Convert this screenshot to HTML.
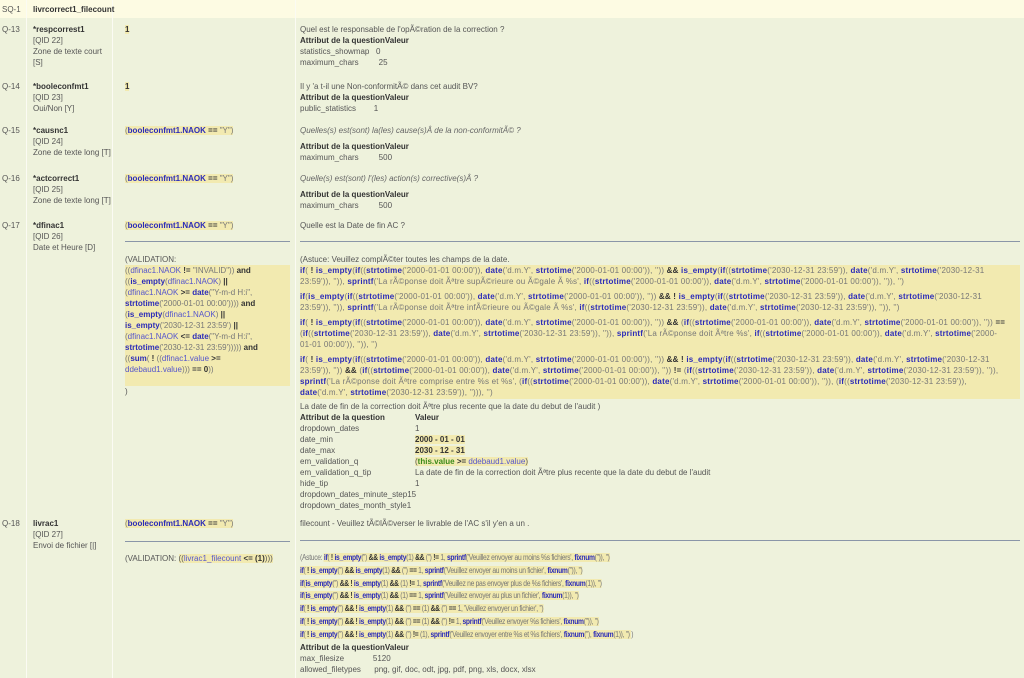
<!DOCTYPE html>
<html><head><meta charset="utf-8"><style>
body{margin:0;width:1024px;height:678px;overflow:hidden;background:#eef2dc;font-family:"Liberation Sans",sans-serif;font-size:8px;color:#555;position:relative}
.row{position:absolute;left:0;width:1024px;background:#eef2dc;border-bottom:1px solid #fbfbf3}
.c{position:absolute;top:0;bottom:0;border-right:1px solid #fbfbf3}
.c1{left:0;width:26px}.c2{left:26px;width:86px}.c3{left:112px;width:183px}.c4{left:295px;width:729px;border-right:none}
.t{position:absolute;white-space:nowrap;line-height:11px}
b{color:#333}
.h{background:#f2eab0}
.f{color:#2b2bb8;font-weight:bold}
.v{color:#5555cc}
.g{color:#3a8a1a;font-weight:bold}
.k{color:#333;font-weight:bold}
.s{color:#777}
.code{letter-spacing:0.2px}
.code2{letter-spacing:-0.35px;transform:scaleX(0.84);transform-origin:0 0}
.hr{position:absolute;height:1px;background:#8a96a8}
i{color:#666}
</style></head><body>

<div class="row" style="top:0;height:18px;background:#fdfbe3">
 <div class="c c1"></div><div class="c c2"></div><div class="c c3"></div><div class="c c4"></div>
 <div class="t" style="left:2px;top:4px">SQ-1</div>
 <div class="t" style="left:33px;top:4px"><b>livrcorrect1_filecount</b></div>
</div>

<div class="row" style="top:18px;height:57px">
 <div class="c c1"></div><div class="c c2"></div><div class="c c3"></div><div class="c c4"></div>
 <div class="t" style="left:2px;top:6px">Q-13</div>
 <div class="t" style="left:33px;top:6px"><b>*respcorrest1</b><br>[QID 22]<br>Zone de texte court<br>[S]</div>
 <div class="t" style="left:125px;top:6px"><span class="h k">1</span></div>
 <div class="t" style="left:300px;top:6px">Quel est le responsable de l'opÃ©ration de la correction ?<br><b>Attribut de la questionValeur</b><br>statistics_showmap&nbsp;&nbsp; 0<br>maximum_chars&nbsp;&nbsp;&nbsp;&nbsp;&nbsp;&nbsp;&nbsp;&nbsp; 25</div>
</div>

<div class="row" style="top:75px;height:44px">
 <div class="c c1"></div><div class="c c2"></div><div class="c c3"></div><div class="c c4"></div>
 <div class="t" style="left:2px;top:6px">Q-14</div>
 <div class="t" style="left:33px;top:6px"><b>*booleconfmt1</b><br>[QID 23]<br>Oui/Non [Y]</div>
 <div class="t" style="left:125px;top:6px"><span class="h k">1</span></div>
 <div class="t" style="left:300px;top:6px">Il y 'a t-il une Non-conformitÃ© dans cet audit BV?<br><b>Attribut de la questionValeur</b><br>public_statistics&nbsp;&nbsp;&nbsp;&nbsp;&nbsp;&nbsp;&nbsp; 1</div>
</div>

<div class="row" style="top:119px;height:48px">
 <div class="c c1"></div><div class="c c2"></div><div class="c c3"></div><div class="c c4"></div>
 <div class="t" style="left:2px;top:6px">Q-15</div>
 <div class="t" style="left:33px;top:6px"><b>*causnc1</b><br>[QID 24]<br>Zone de texte long [T]</div>
 <div class="t" style="left:125px;top:6px"><span class="h"><span class="s">(</span><span class="f">booleconfmt1.NAOK</span> <span class="k">==</span> <span class="s">"Y")</span></span></div>
 <div class="t" style="left:300px;top:6px"><i>Quelles(s) est(sont) la(les) cause(s)Â de la non-conformitÃ© ?</i></div>
 <div class="t" style="left:300px;top:22px"><b>Attribut de la questionValeur</b><br>maximum_chars&nbsp;&nbsp;&nbsp;&nbsp;&nbsp;&nbsp;&nbsp;&nbsp; 500</div>
</div>

<div class="row" style="top:167px;height:45px">
 <div class="c c1"></div><div class="c c2"></div><div class="c c3"></div><div class="c c4"></div>
 <div class="t" style="left:2px;top:6px">Q-16</div>
 <div class="t" style="left:33px;top:6px"><b>*actcorrect1</b><br>[QID 25]<br>Zone de texte long [T]</div>
 <div class="t" style="left:125px;top:6px"><span class="h"><span class="s">(</span><span class="f">booleconfmt1.NAOK</span> <span class="k">==</span> <span class="s">"Y")</span></span></div>
 <div class="t" style="left:300px;top:6px"><i>Quelle(s) est(sont) l'(les) action(s) corrective(s)Â ?</i></div>
 <div class="t" style="left:300px;top:22px"><b>Attribut de la questionValeur</b><br>maximum_chars&nbsp;&nbsp;&nbsp;&nbsp;&nbsp;&nbsp;&nbsp;&nbsp; 500</div>
</div>

<div class="row" style="top:212px;height:298px">
 <div class="c c1"></div><div class="c c2"></div><div class="c c3"></div><div class="c c4"></div>
 <div class="t" style="left:2px;top:8px">Q-17</div>
 <div class="t" style="left:33px;top:8px"><b>*dfinac1</b><br>[QID 26]<br>Date et Heure [D]</div>
 <div class="t" style="left:125px;top:8px"><span class="h"><span class="s">(</span><span class="f">booleconfmt1.NAOK</span> <span class="k">==</span> <span class="s">"Y")</span></span></div>
 <div class="hr" style="left:125px;top:29px;width:165px"></div>
 <div class="t" style="left:125px;top:42px">(VALIDATION:</div>
 <div class="t h" style="left:125px;top:53px;width:165px;height:121px;color:#777">((<span class="v">dfinac1.NAOK</span> <span class="k">!=</span> "INVALID")) <span class="k">and</span><br>((<span class="f">is_empty</span>(<span class="v">dfinac1.NAOK</span>) <span class="k">||</span><br>(<span class="v">dfinac1.NAOK</span> <span class="k">&gt;=</span> <span class="f">date</span>("Y-m-d H:i",<br><span class="f">strtotime</span>('2000-01-01 00:00')))) <span class="k">and</span><br>(<span class="f">is_empty</span>(<span class="v">dfinac1.NAOK</span>) <span class="k">||</span><br><span class="f">is_empty</span>('2030-12-31 23:59') <span class="k">||</span><br>(<span class="v">dfinac1.NAOK</span> <span class="k">&lt;=</span> <span class="f">date</span>("Y-m-d H:i",<br><span class="f">strtotime</span>('2030-12-31 23:59'))))) <span class="k">and</span><br>((<span class="f">sum</span>( <span class="k">!</span> ((<span class="v">dfinac1.value</span> <span class="k">&gt;=</span><br><span class="v">ddebaud1.value</span>))) <span class="k">==</span> <span class="k">0</span>))</div>
 <div class="t" style="left:125px;top:174px">)</div>

 <div class="t" style="left:300px;top:8px">Quelle est la Date de fin AC ?</div>
 <div class="hr" style="left:300px;top:29px;width:720px"></div>
 <div class="t" style="left:300px;top:42px">(Astuce: Veuillez complÃ©ter toutes les champs de la date.</div>
 <div class="t h code" style="left:300px;top:53px;width:720px;height:134px;color:#777;line-height:11px;overflow:hidden">
<span class="f">if</span>( <span class="k">!</span> <span class="f">is_empty</span>(<span class="f">if</span>((<span class="f">strtotime</span>('2000-01-01 00:00')), <span class="f">date</span>('d.m.Y', <span class="f">strtotime</span>('2000-01-01 00:00')), '')) <span class="k">&amp;&amp;</span> <span class="f">is_empty</span>(<span class="f">if</span>((<span class="f">strtotime</span>('2030-12-31 23:59')), <span class="f">date</span>('d.m.Y', <span class="f">strtotime</span>('2030-12-31<br>23:59')), '')), <span class="f">sprintf</span>('La rÃ©ponse doit Ãªtre supÃ©rieure ou Ã©gale Ã  %s', <span class="f">if</span>((<span class="f">strtotime</span>('2000-01-01 00:00')), <span class="f">date</span>('d.m.Y', <span class="f">strtotime</span>('2000-01-01 00:00')), '')), '')<br>
<div style="height:4px"></div><span class="f">if</span>(<span class="f">is_empty</span>(<span class="f">if</span>((<span class="f">strtotime</span>('2000-01-01 00:00')), <span class="f">date</span>('d.m.Y', <span class="f">strtotime</span>('2000-01-01 00:00')), '')) <span class="k">&amp;&amp; !</span> <span class="f">is_empty</span>(<span class="f">if</span>((<span class="f">strtotime</span>('2030-12-31 23:59')), <span class="f">date</span>('d.m.Y', <span class="f">strtotime</span>('2030-12-31<br>23:59')), '')), <span class="f">sprintf</span>('La rÃ©ponse doit Ãªtre infÃ©rieure ou Ã©gale Ã  %s', <span class="f">if</span>((<span class="f">strtotime</span>('2030-12-31 23:59')), <span class="f">date</span>('d.m.Y', <span class="f">strtotime</span>('2030-12-31 23:59')), '')), '')<br>
<div style="height:4px"></div><span class="f">if</span>( <span class="k">!</span> <span class="f">is_empty</span>(<span class="f">if</span>((<span class="f">strtotime</span>('2000-01-01 00:00')), <span class="f">date</span>('d.m.Y', <span class="f">strtotime</span>('2000-01-01 00:00')), '')) <span class="k">&amp;&amp;</span> (<span class="f">if</span>((<span class="f">strtotime</span>('2000-01-01 00:00')), <span class="f">date</span>('d.m.Y', <span class="f">strtotime</span>('2000-01-01 00:00')), '')) <span class="k">==</span><br>(<span class="f">if</span>((<span class="f">strtotime</span>('2030-12-31 23:59')), <span class="f">date</span>('d.m.Y', <span class="f">strtotime</span>('2030-12-31 23:59')), '')), <span class="f">sprintf</span>('La rÃ©ponse doit Ãªtre %s', <span class="f">if</span>((<span class="f">strtotime</span>('2000-01-01 00:00')), <span class="f">date</span>('d.m.Y', <span class="f">strtotime</span>('2000-<br>01-01 00:00')), '')), '')<br>
<div style="height:4px"></div><span class="f">if</span>( <span class="k">!</span> <span class="f">is_empty</span>(<span class="f">if</span>((<span class="f">strtotime</span>('2000-01-01 00:00')), <span class="f">date</span>('d.m.Y', <span class="f">strtotime</span>('2000-01-01 00:00')), '')) <span class="k">&amp;&amp; !</span> <span class="f">is_empty</span>(<span class="f">if</span>((<span class="f">strtotime</span>('2030-12-31 23:59')), <span class="f">date</span>('d.m.Y', <span class="f">strtotime</span>('2030-12-31<br>23:59')), '')) <span class="k">&amp;&amp;</span> (<span class="f">if</span>((<span class="f">strtotime</span>('2000-01-01 00:00')), <span class="f">date</span>('d.m.Y', <span class="f">strtotime</span>('2000-01-01 00:00')), '')) <span class="k">!=</span> (<span class="f">if</span>((<span class="f">strtotime</span>('2030-12-31 23:59')), <span class="f">date</span>('d.m.Y', <span class="f">strtotime</span>('2030-12-31 23:59')), '')),<br><span class="f">sprintf</span>('La rÃ©ponse doit Ãªtre comprise entre %s et %s', (<span class="f">if</span>((<span class="f">strtotime</span>('2000-01-01 00:00')), <span class="f">date</span>('d.m.Y', <span class="f">strtotime</span>('2000-01-01 00:00')), '')), (<span class="f">if</span>((<span class="f">strtotime</span>('2030-12-31 23:59')),<br><span class="f">date</span>('d.m.Y', <span class="f">strtotime</span>('2030-12-31 23:59')), ''))), '')
 </div>
 <div class="t" style="left:300px;top:189px">La date de fin de la correction doit Ãªtre plus recente que la date du debut de l'audit )</div>
 <div class="t" style="left:300px;top:200px"><b>Attribut de la question</b></div>
 <div class="t" style="left:415px;top:200px"><b>Valeur</b></div>
 <div class="t" style="left:300px;top:211px">dropdown_dates<br>date_min<br>date_max<br>em_validation_q<br>em_validation_q_tip<br>hide_tip<br>dropdown_dates_minute_step15<br>dropdown_dates_month_style1</div>
 <div class="t" style="left:415px;top:211px">1<br><span class="h k">2000 - 01 - 01</span><br><span class="h k">2030 - 12 - 31</span><br><span class="h">(<span class="g">this.value</span> <span class="k">&gt;=</span> <span class="v">ddebaud1.value</span>)</span><br>La date de fin de la correction doit Ãªtre plus recente que la date du debut de l'audit<br>1</div>
</div>

<div class="row" style="top:510px;height:168px;border-bottom:none">
 <div class="c c1"></div><div class="c c2"></div><div class="c c3"></div><div class="c c4"></div>
 <div class="t" style="left:2px;top:8px">Q-18</div>
 <div class="t" style="left:33px;top:8px"><b>livrac1</b><br>[QID 27]<br>Envoi de fichier [|]</div>
 <div class="t" style="left:125px;top:8px"><span class="h"><span class="s">(</span><span class="f">booleconfmt1.NAOK</span> <span class="k">==</span> <span class="s">"Y")</span></span></div>
 <div class="hr" style="left:125px;top:31px;width:165px"></div>
 <div class="t" style="left:125px;top:43px">(VALIDATION: <span class="h">((<span class="v">livrac1_filecount</span> <span class="k">&lt;=</span> <span class="k">(1)</span>)))</span></div>
 <div class="t" style="left:300px;top:8px">filecount - Veuillez tÃ©lÃ©verser le livrable de l'AC s'il y'en a un .</div>
 <div class="hr" style="left:300px;top:30px;width:720px"></div>
 <div class="t code2" style="left:300px;top:42px;line-height:12.8px;color:#777">(Astuce: <span class="h"><span class="f">if</span>( <span class="k">!</span> <span class="f">is_empty</span>('') <span class="k">&amp;&amp;</span> <span class="f">is_empty</span>(1) <span class="k">&amp;&amp;</span> ('') <span class="k">!=</span> 1, <span class="f">sprintf</span>('Veuillez envoyer au moins %s fichiers', <span class="f">fixnum</span>('')), '')</span><br>
<span class="h"><span class="f">if</span>( <span class="k">!</span> <span class="f">is_empty</span>('') <span class="k">&amp;&amp;</span> <span class="f">is_empty</span>(1) <span class="k">&amp;&amp;</span> ('') <span class="k">==</span> 1, <span class="f">sprintf</span>('Veuillez envoyer au moins un fichier', <span class="f">fixnum</span>('')), '')</span><br>
<span class="h"><span class="f">if</span>(<span class="f">is_empty</span>('') <span class="k">&amp;&amp; !</span> <span class="f">is_empty</span>(1) <span class="k">&amp;&amp;</span> (1) <span class="k">!=</span> 1, <span class="f">sprintf</span>('Veuillez ne pas envoyer plus de %s fichiers', <span class="f">fixnum</span>(1)), '')</span><br>
<span class="h"><span class="f">if</span>(<span class="f">is_empty</span>('') <span class="k">&amp;&amp; !</span> <span class="f">is_empty</span>(1) <span class="k">&amp;&amp;</span> (1) <span class="k">==</span> 1, <span class="f">sprintf</span>('Veuillez envoyer au plus un fichier', <span class="f">fixnum</span>(1)), '')</span><br>
<span class="h"><span class="f">if</span>( <span class="k">!</span> <span class="f">is_empty</span>('') <span class="k">&amp;&amp; !</span> <span class="f">is_empty</span>(1) <span class="k">&amp;&amp;</span> ('') <span class="k">==</span> (1) <span class="k">&amp;&amp;</span> ('') <span class="k">==</span> 1, 'Veuillez envoyer un fichier', '')</span><br>
<span class="h"><span class="f">if</span>( <span class="k">!</span> <span class="f">is_empty</span>('') <span class="k">&amp;&amp; !</span> <span class="f">is_empty</span>(1) <span class="k">&amp;&amp;</span> ('') <span class="k">==</span> (1) <span class="k">&amp;&amp;</span> ('') <span class="k">!=</span> 1, <span class="f">sprintf</span>('Veuillez envoyer %s fichiers', <span class="f">fixnum</span>('')), '')</span><br>
<span class="h"><span class="f">if</span>( <span class="k">!</span> <span class="f">is_empty</span>('') <span class="k">&amp;&amp; !</span> <span class="f">is_empty</span>(1) <span class="k">&amp;&amp;</span> ('') <span class="k">!=</span> (1), <span class="f">sprintf</span>('Veuillez envoyer entre %s et %s fichiers', <span class="f">fixnum</span>(''), <span class="f">fixnum</span>(1)), '') </span>)</div>
 <div class="t" style="left:300px;top:132px"><b>Attribut de la questionValeur</b><br>max_filesize&nbsp;&nbsp;&nbsp;&nbsp;&nbsp;&nbsp;&nbsp;&nbsp;&nbsp;&nbsp;&nbsp;&nbsp; 5120<br>allowed_filetypes&nbsp;&nbsp;&nbsp;&nbsp;&nbsp; png, gif, doc, odt, jpg, pdf, png, xls, docx, xlsx</div>
</div>
</body></html>
